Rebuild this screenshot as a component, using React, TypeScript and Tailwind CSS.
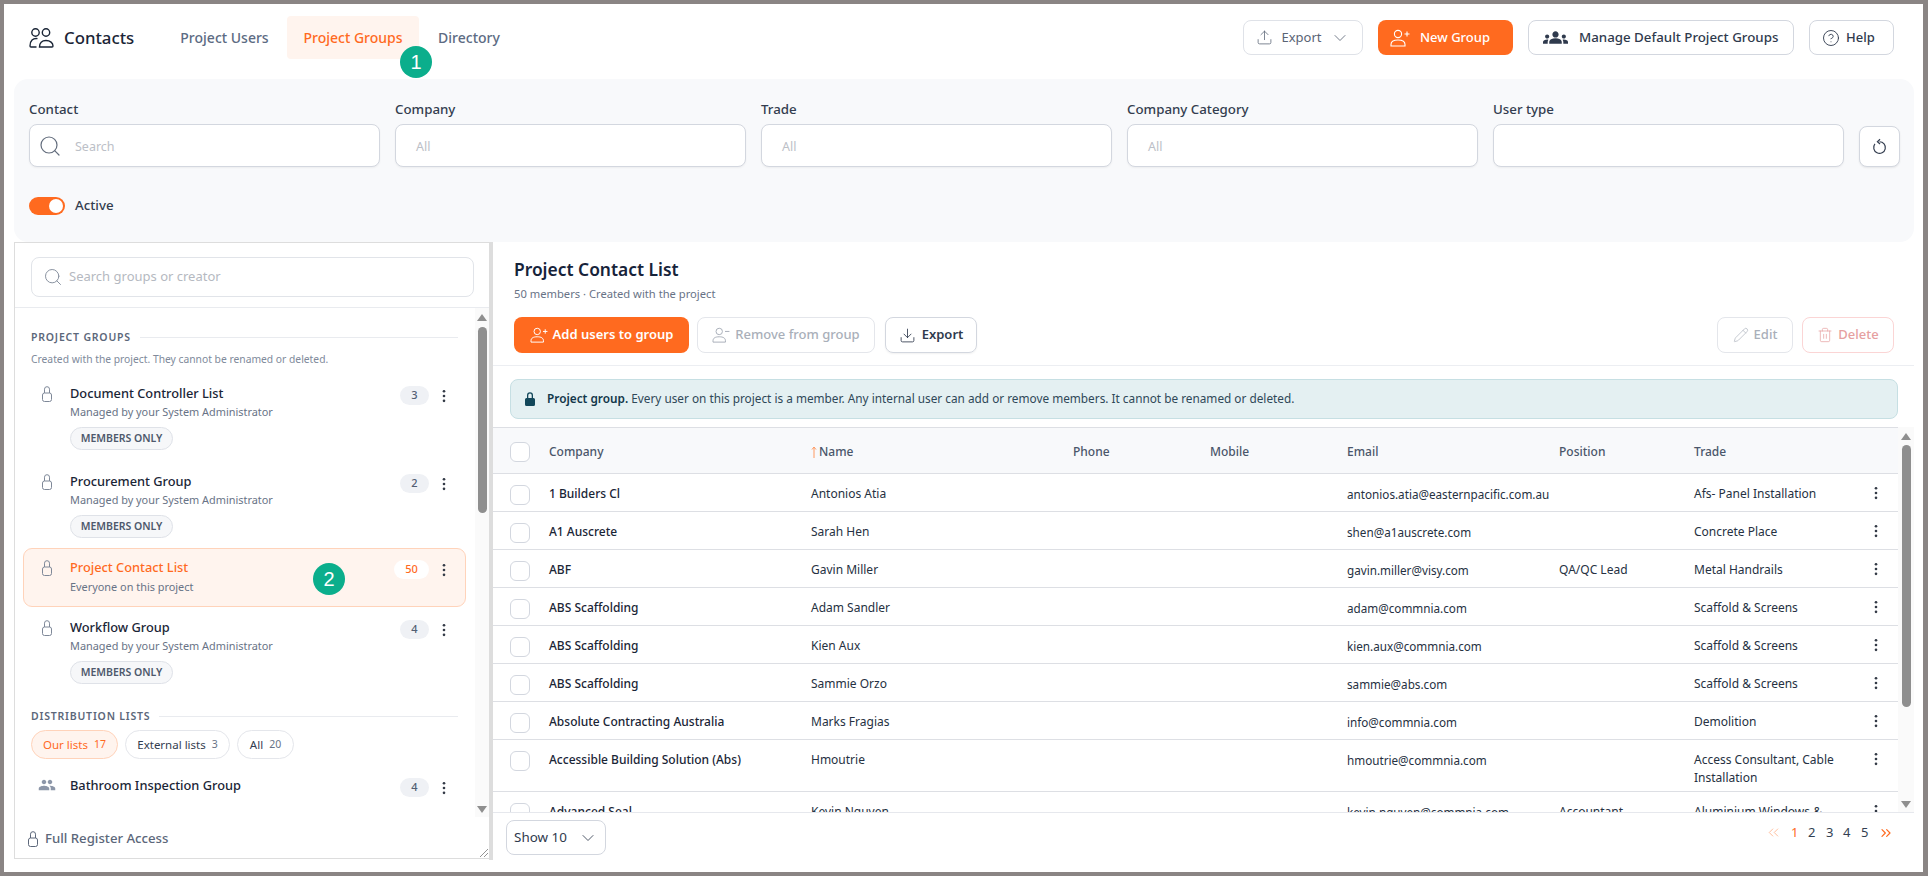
import {
  ChevronDown,
  ChevronsLeft,
  ChevronsRight,
  CircleHelp,
  Download,
  Pencil,
  Search,
  Trash2,
  Upload,
} from "lucide-react";
import { MdGroup, MdGroups } from "react-icons/md";

type Row = {
  company: string;
  name: string;
  email: string;
  position?: string;
  trade: string;
  tall?: boolean;
};

const rows: Row[] = [
  { company: "1 Builders Cl", name: "Antonios Atia", email: "antonios.atia@easternpacific.com.au", trade: "Afs- Panel Installation" },
  { company: "A1 Auscrete", name: "Sarah Hen", email: "shen@a1auscrete.com", trade: "Concrete Place" },
  { company: "ABF", name: "Gavin Miller", email: "gavin.miller@visy.com", position: "QA/QC Lead", trade: "Metal Handrails" },
  { company: "ABS Scaffolding", name: "Adam Sandler", email: "adam@commnia.com", trade: "Scaffold & Screens" },
  { company: "ABS Scaffolding", name: "Kien Aux", email: "kien.aux@commnia.com", trade: "Scaffold & Screens" },
  { company: "ABS Scaffolding", name: "Sammie Orzo", email: "sammie@abs.com", trade: "Scaffold & Screens" },
  { company: "Absolute Contracting Australia", name: "Marks Fragias", email: "info@commnia.com", trade: "Demolition" },
  { company: "Accessible Building Solution (Abs)", name: "Hmoutrie", email: "hmoutrie@commnia.com", trade: "Access Consultant, Cable Installation", tall: true },
  { company: "Advanced Seal", name: "Kevin Nguyen", email: "kevin.nguyen@commnia.com", position: "Accountant", trade: "Aluminium Windows & Doors", tall: true },
];

const Padlock = ({ className = "" }: { className?: string }) => (
  <svg viewBox="0 0 10 16" className={className} fill="none" stroke="currentColor" strokeWidth="1">
    <rect x="0.5" y="7" width="9" height="8.5" rx="2" />
    <path d="M2.5 7V3.2a2.5 2.5 0 0 1 5 0V7" />
  </svg>
);

const Kebab = ({ className = "" }: { className?: string }) => (
  <svg viewBox="0 0 4 16" className={className} fill="currentColor">
    <circle cx="2" cy="2.5" r="1.5" />
    <circle cx="2" cy="8" r="1.5" />
    <circle cx="2" cy="13.5" r="1.5" />
  </svg>
);

const PersonAdd = ({ sign, className = "" }: { sign: "plus" | "minus"; className?: string }) => (
  <svg viewBox="0 0 20 18" className={className} fill="none" stroke="currentColor" strokeWidth="1.1">
    <circle cx="8" cy="5" r="3.6" />
    <path d="M1 17v-1.500C1 12.500 3.500 11 8 11s7 1.500 7 4.500V17z" />
    {sign === "plus" ? <path d="M14.500 5h5M17 2.500v5" /> : <path d="M14.500 5h5" />}
  </svg>
);

const Field = ({ label, placeholder }: { label: string; placeholder?: string }) => (
  <div className="w-[351px] shrink-0">
    <div className="h-[20px] text-[13.3px] leading-[20px] font-medium text-[#333d4f]">{label}</div>
    <div className="mt-[5px] flex h-[43px] items-center rounded-lg border border-[#d3d7df] bg-white pt-[3px] pl-[20px] text-[12.5px] text-[#bcc0c7] shadow-[0_1px_2px_rgba(0,0,0,0.05)]">
      {placeholder}
    </div>
  </div>
);

const Pill = ({ value, active }: { value: number; active?: boolean }) => (
  <span
    className={
      active
        ? "mt-[2px] flex h-[19px] w-[35px] items-center justify-center rounded-full bg-white text-[11px] font-medium text-[#ff6a1f]"
        : "mt-[2px] flex h-[19px] w-[29px] items-center justify-center rounded-full bg-[#eff1f5] text-[11px] font-medium text-[#525e73]"
    }
  >
    {value}
  </span>
);

const GroupItem = ({
  title,
  sub,
  count,
  active,
  membersOnly,
  tight,
}: {
  title: string;
  sub: string;
  count: number;
  active?: boolean;
  membersOnly?: boolean;
  tight?: boolean;
}) => (
  <div
    className={
      active
        ? "flex rounded-[9px] border border-[#ffd3ba] bg-[#fff4ee] pt-[9px] pr-[13px] pb-[11px] pl-[18px]"
        : tight
          ? "flex rounded-[9px] border border-transparent pt-[10px] pr-[13px] pb-[9px] pl-[18px]"
          : "flex rounded-[9px] border border-transparent pt-[10px] pr-[13px] pb-[10px] pl-[18px]"
    }
  >
    <Padlock className="mt-[2px] h-[16px] w-[10px] shrink-0 text-[#7e8898]" />
    <div className="ml-[18px] min-w-0 flex-1">
      <div className={active ? "text-[12.8px] leading-[18px] font-medium text-[#ff6a1f]" : "text-[12.8px] leading-[18px] font-medium text-[#1a2536]"}>
        {title}
      </div>
      <div className={active ? "mt-[3px] text-[10.9px] leading-[16px] text-[#687386]" : "mt-[2px] text-[10.9px] leading-[16px] text-[#687386]"}>{sub}</div>
      {membersOnly && (
        <span className="mt-[7px] flex h-[23px] w-[103px] items-center justify-center rounded-full border border-[#dfe2e8] bg-[#f6f7f9] text-[10.5px] font-semibold text-[#4e596c]">
          MEMBERS ONLY
        </span>
      )}
    </div>
    <Pill value={count} active={active} />
    <span className="mt-[2px] ml-[7px] flex h-[19px] w-[16px] justify-center">
      <Kebab className="h-[14px] w-[4px] self-center text-[#333a46]" />
    </span>
  </div>
);

const SectionHead = ({ label }: { label: string }) => (
  <div className="mx-[8px] flex items-center gap-[9px]">
    <span className="text-[10.5px] leading-[14px] font-semibold tracking-[0.8px] whitespace-nowrap text-[#5c677a]">{label}</span>
    <span className="h-px flex-1 bg-[#e9ebef]" />
  </div>
);

const Chip = ({ label, n, active, className = "" }: { label: string; n: number; active?: boolean; className?: string }) => (
  <span
    className={
      (active
        ? "flex h-[29px] items-center justify-center gap-[6px] rounded-full border border-[#ffd3ba] bg-[#fff4ee] text-[11.5px] text-[#ff6a1f] "
        : "flex h-[29px] items-center justify-center gap-[6px] rounded-full border border-[#e4e6eb] bg-white text-[11.5px] text-[#333d4f] ") + className
    }
  >
    {label}
    <span className={active ? "text-[10.5px] text-[#ff6a1f]" : "text-[10.5px] text-[#687386]"}>{n}</span>
  </span>
);

const ScrollRail = ({ thumbTop, thumbHeight, className }: { thumbTop: string; thumbHeight: string; className: string }) => (
  <div className={className}>
    <svg viewBox="0 0 10 7" className="mx-auto mt-[6px] h-[7px] w-[10px] shrink-0 text-[#8f8f8f]" fill="currentColor">
      <path d="M5 0l5 7H0z" />
    </svg>
    <div className={"mx-auto w-[9px] rounded-full bg-[#8f8f8f] " + thumbTop + " " + thumbHeight} />
    <div className="flex-1" />
    <svg viewBox="0 0 10 7" className="mx-auto mb-[4px] h-[7px] w-[10px] shrink-0 text-[#8f8f8f]" fill="currentColor">
      <path d="M5 7L0 0h10z" />
    </svg>
  </div>
);

const Checkbox = () => <span className="block h-[20px] w-[20px] rounded-[6px] border border-[#d3d7df] bg-white" />;

const Step = ({ n, className }: { n: number; className: string }) => (
  <span
    className={
      "absolute z-10 flex h-[32px] w-[32px] items-center justify-center rounded-full bg-[#0bae8c] font-['Liberation_Sans',sans-serif] text-[20px] text-white " +
      className
    }
  >
    {n}
  </span>
);

export default function App() {
  return (
    <div className="h-[876px] w-[1928px] overflow-hidden bg-[#8a8584] pt-[4px] pr-[5px] pb-[4px] pl-[4px] font-['Noto_Sans',sans-serif]">
      <div className="relative flex h-[868px] flex-col bg-white">
        <header className="flex h-[67px] shrink-0 items-center pr-[29px] pl-[25px]">
          <svg viewBox="0 0 25 20" className="h-[20px] w-[25px] text-[#1a2536]" fill="none" stroke="currentColor" strokeWidth="1.4">
            <circle cx="6.500" cy="4.500" r="3.700" />
            <circle cx="17" cy="4.500" r="3.700" />
            <path d="M10.500 19c0-4 2.300-6.500 6.500-6.500s7 2.500 7 5.500c0 .7-.3 1-1 1z" />
            <path d="M8.500 10.600C4 10 1 12.500 1 18c0 .7.3 1 1 1h5.500" />
          </svg>
          <span className="ml-[10px] w-[71px] text-[16.8px] font-medium whitespace-nowrap text-[#1a2536]">Contacts</span>
          <nav className="ml-[29px] flex items-center text-[14px] font-medium text-[#5c6b83]">
            <span className="flex h-[43px] w-[121px] items-center justify-center">Project Users</span>
            <span className="ml-[2px] flex h-[43px] w-[132px] items-center justify-center rounded bg-[#fff4ee] text-[#ff6a1f]">Project Groups</span>
            <span className="ml-[3px] flex h-[43px] w-[94px] items-center justify-center">Directory</span>
          </nav>
          <div className="flex-1" />
          <button className="flex h-[35px] w-[120px] items-center justify-center gap-[8px] rounded-lg border border-[#dfe2e8] text-[13px] text-[#5a6475]">
            <Upload size={17} strokeWidth={1.1} />
            Export
            <ChevronDown size={20} strokeWidth={1} />
          </button>
          <button className="ml-[15px] flex h-[35px] w-[135px] items-center gap-[10px] rounded-lg bg-[#ff6a1f] pl-[12px] text-[13px] font-medium text-white">
            <PersonAdd sign="plus" className="h-[18px] w-[20px]" />
            New Group
          </button>
          <button className="ml-[15px] flex h-[35px] w-[266px] items-center gap-[11px] rounded-lg border border-[#d3d7df] pl-[14px] text-[13.3px] font-medium text-[#2f3a4d]">
            <MdGroups size={25} />
            Manage Default Project Groups
          </button>
          <button className="ml-[15px] flex h-[35px] w-[85px] items-center gap-[6px] rounded-lg border border-[#d3d7df] pl-[12px] text-[13px] font-medium text-[#2f3a4d]">
            <CircleHelp size={18} strokeWidth={1.2} />
            Help
          </button>
        </header>

        <section className="mt-[8px] mr-[9px] ml-[10px] h-[163px] shrink-0 rounded-[14px] bg-[#f8f9fb] pt-[20px] pl-[15px]">
          <div className="flex gap-[15px]">
            <div className="w-[351px] shrink-0">
              <div className="h-[20px] text-[13.3px] leading-[20px] font-medium text-[#333d4f]">Contact</div>
              <div className="mt-[5px] flex h-[43px] items-center rounded-lg border border-[#d3d7df] bg-white pl-[8px] text-[12.5px] text-[#bcc0c7] shadow-[0_1px_2px_rgba(0,0,0,0.05)]">
                <Search size={24} strokeWidth={1.2} className="text-[#626c7c]" />
                <span className="mt-[3px] ml-[13px]">Search</span>
              </div>
            </div>
            <Field label="Company" placeholder="All" />
            <Field label="Trade" placeholder="All" />
            <Field label="Company Category" placeholder="All" />
            <Field label="User type" />
            <button className="mt-[27px] flex h-[41px] w-[41px] items-center justify-center rounded-lg border border-[#d3d7df] bg-white text-[#333d4f] shadow-[0_1px_2px_rgba(0,0,0,0.08)]">
              <svg viewBox="0 0 16 16" className="h-[17px] w-[17px]" fill="none" stroke="currentColor" strokeWidth="1.1">
                <path d="M8 3.500a5.500 5.500 0 1 1-4.300 2.100" />
                <path d="M8.500 1.200L6 3.500l2.500 2.200" />
              </svg>
            </button>
          </div>
          <div className="mt-[29px] flex items-center">
            <span className="flex h-[18px] w-[36px] items-center justify-end rounded-full bg-[#ff6a1f] pr-[2px]">
              <span className="h-[14px] w-[14px] rounded-full bg-white" />
            </span>
            <span className="ml-[10px] text-[13.3px] font-medium text-[#333d4f]">Active</span>
          </div>
        </section>

        <div className="flex min-h-0 flex-1">
          <aside className="relative ml-[10px] flex h-[617px] w-[475px] shrink-0 flex-col border border-r-0 border-[#dddddd]">
            <div className="h-[65px] shrink-0 border-b border-[#e9ebef] pt-[14px] pr-[15px] pl-[16px]">
              <div className="flex h-[40px] items-center rounded-lg border border-[#e1e4e9] pl-[11px] text-[13px] text-[#b5b9c1]">
                <Search size={20} strokeWidth={1.2} className="text-[#8a93a1]" />
                <span className="ml-[6px]">Search groups or creator</span>
              </div>
            </div>
            <div className="flex min-h-0 flex-1">
              <div className="min-w-0 flex-1 overflow-hidden pt-[22px] pr-[9px] pl-[8px]">
                <SectionHead label="PROJECT GROUPS" />
                <p className="mx-[8px] mt-[8px] mb-[6px] text-[10.3px] leading-[15px] text-[#808a9b]">
                  Created with the project. They cannot be renamed or deleted.
                </p>
                <GroupItem title="Document Controller List" sub="Managed by your System Administrator" count={3} membersOnly />
                <GroupItem title="Procurement Group" sub="Managed by your System Administrator" count={2} membersOnly tight />
                <GroupItem title="Project Contact List" sub="Everyone on this project" count={50} active />
                <GroupItem title="Workflow Group" sub="Managed by your System Administrator" count={4} membersOnly />
                <div className="mt-[14px]">
                  <SectionHead label="DISTRIBUTION LISTS" />
                </div>
                <div className="mx-[8px] mt-[7px] flex gap-[7px]">
                  <Chip label="Our lists" n={17} active className="w-[87px]" />
                  <Chip label="External lists" n={3} className="w-[105px]" />
                  <Chip label="All" n={20} className="w-[57px]" />
                </div>
                <div className="mt-[6px] flex pt-[11px] pr-[14px] pl-[15px]">
                  <MdGroup size={18} className="shrink-0 text-[#8c96a8]" />
                  <div className="ml-[14px] flex-1 text-[12.8px] leading-[18px] font-medium text-[#1a2536]">Bathroom Inspection Group</div>
                  <Pill value={4} />
                  <span className="mt-[2px] ml-[7px] flex h-[19px] w-[16px] justify-center">
                    <Kebab className="h-[14px] w-[4px] self-center text-[#333a46]" />
                  </span>
                </div>
              </div>
              <ScrollRail className="flex h-full w-[14px] shrink-0 flex-col bg-[#fafafa]" thumbTop="mt-[6px]" thumbHeight="h-[186px]" />
            </div>
            <div className="flex h-[41px] shrink-0 items-center pt-[3px] pl-[13px] text-[13.2px] text-[#5c677a]">
              <Padlock className="h-[16px] w-[10px] text-[#5c677a]" />
              <span className="ml-[7px] font-medium">Full Register Access</span>
            </div>
            <svg viewBox="0 0 8 8" className="absolute right-[1px] bottom-[1px] h-[8px] w-[8px] text-[#777777]" fill="none" stroke="currentColor" strokeWidth="0.8">
              <path d="M0 8L8 0M4 8L8 4" />
            </svg>
            <Step n={2} className="top-[320px] left-[298px]" />
          </aside>

          <div className="h-[618px] w-[4px] shrink-0 bg-[#dddddd]" />

          <main className="mr-[9px] flex h-[618px] min-w-0 flex-1 flex-col">
            <div className="h-[124px] shrink-0 border-b border-[#eceef2] pt-[16px] pr-[20px] pl-[21px]">
              <h1 className="text-[17.4px] leading-[22px] font-semibold text-[#16233a]">Project Contact List</h1>
              <p className="mt-[6px] text-[11.2px] leading-[16px] text-[#687386]">50 members · Created with the project</p>
              <div className="mt-[15px] flex">
                <button className="flex h-[36px] w-[175px] items-center justify-center gap-[5px] rounded-lg bg-[#ff6a1f] text-[13px] font-semibold text-white">
                  <PersonAdd sign="plus" className="h-[16px] w-[18px]" />
                  Add users to group
                </button>
                <button className="ml-[8px] flex h-[36px] w-[178px] items-center justify-center gap-[5px] rounded-lg border border-[#e4e6eb] text-[13px] font-medium text-[#a9afb9]">
                  <PersonAdd sign="minus" className="h-[16px] w-[18px]" />
                  Remove from group
                </button>
                <button className="ml-[10px] flex h-[36px] w-[92px] items-center justify-center gap-[6px] rounded-lg border border-[#d3d7df] text-[13px] font-semibold text-[#2f3a4d] shadow-[0_1px_2px_rgba(0,0,0,0.06)]">
                  <Download size={17} strokeWidth={1.2} />
                  Export
                </button>
                <div className="flex-1" />
                <button className="flex h-[36px] w-[76px] items-center justify-center gap-[5px] rounded-lg border border-[#e4e6eb] text-[13px] font-medium text-[#a9afb9]">
                  <Pencil size={16} strokeWidth={1} />
                  Edit
                </button>
                <button className="ml-[9px] flex h-[36px] w-[92px] items-center justify-center gap-[5px] rounded-lg border border-[#fbd5d5] text-[13px] font-medium text-[#e6a0a0]">
                  <Trash2 size={16} strokeWidth={1.1} />
                  Delete
                </button>
              </div>
            </div>

            <div className="mt-[13px] mr-[16px] ml-[17px] flex h-[40px] shrink-0 items-center rounded-lg border border-[#c6dfe3] bg-[#e4f0f2] pl-[14px] text-[11.8px] text-[#2f4858]">
              <svg viewBox="0 0 10 14" className="h-[14px] w-[10px] text-[#12475a]" fill="currentColor">
                <path d="M2 6V3.200a3 3 0 0 1 6 0V6h.5A1.500 1.500 0 0 1 10 7.500v5A1.500 1.500 0 0 1 8.500 14h-7A1.500 1.500 0 0 1 0 12.500v-5A1.500 1.500 0 0 1 1.500 6zM3.300 6h3.400V3.200a1.700 1.700 0 0 0-3.400 0z" />
              </svg>
              <span className="ml-[12px]">
                <b className="font-semibold text-[#12374a]">Project group.</b> Every user on this project is a member. Any internal user can add or
                remove members. It cannot be renamed or deleted.
              </span>
            </div>

            <div className="mt-[8px] flex min-h-0 flex-1">
              <div className="min-w-0 flex-1 overflow-hidden">
                <table className="w-[1405px] table-fixed border-t border-[#dddfe4] text-left text-[12px] text-[#263142]">
                  <colgroup>
                    <col className="w-[56px]" />
                    <col className="w-[262px]" />
                    <col className="w-[262px]" />
                    <col className="w-[137px]" />
                    <col className="w-[137px]" />
                    <col className="w-[212px]" />
                    <col className="w-[135px]" />
                    <col className="w-[165px]" />
                    <col className="w-[39px]" />
                  </colgroup>
                  <thead className="bg-[#f8f9fb] text-[#4a566a]">
                    <tr className="h-[46px] border-b border-[#dddfe4]">
                      <th className="pt-[3px] pl-[17px]">
                        <Checkbox />
                      </th>
                      <th className="pt-[3px] font-medium">Company</th>
                      <th className="pt-[2px] font-medium">
                        <span className="flex items-center gap-[2px]">
                          <svg viewBox="0 0 6 12" className="h-[12px] w-[6px] text-[#ff9a63]" fill="none" stroke="currentColor" strokeWidth="1">
                            <path d="M3 12V1M1 3.500L3 1l2 2.500" />
                          </svg>
                          Name
                        </span>
                      </th>
                      <th className="pt-[3px] font-medium">Phone</th>
                      <th className="pt-[3px] font-medium">Mobile</th>
                      <th className="pt-[3px] font-medium">Email</th>
                      <th className="pt-[3px] font-medium">Position</th>
                      <th className="pt-[3px] font-medium">Trade</th>
                      <th />
                    </tr>
                  </thead>
                  <tbody>
                    {rows.map((r) => (
                      <tr key={r.email} className={r.tall ? "h-[52px] border-b border-[#dddfe4] align-top" : "h-[38px] border-b border-[#dddfe4] align-top"}>
                        <td className="pt-[11px] pl-[17px]">
                          <Checkbox />
                        </td>
                        <td className="pt-[11px] leading-[18px] font-medium text-[#1a2536]">{r.company}</td>
                        <td className="pt-[11px] leading-[18px]">{r.name}</td>
                        <td />
                        <td />
                        <td className="pt-[11px] text-[11.7px] leading-[18px] whitespace-nowrap">{r.email}</td>
                        <td className="pt-[11px] leading-[18px]">{r.position}</td>
                        <td className="pt-[11px] pr-[8px] leading-[18px]">{r.trade}</td>
                        <td className="pt-[12px] pl-[15px]">
                          <Kebab className="h-[14px] w-[4px] text-[#333a46]" />
                        </td>
                      </tr>
                    ))}
                  </tbody>
                </table>
              </div>
              <ScrollRail className="flex w-[16px] shrink-0 flex-col bg-[#fafafa]" thumbTop="mt-[5px]" thumbHeight="h-[262px]" />
            </div>

            <div className="flex h-[48px] shrink-0 items-start justify-between border-t border-[#e6e8ed]">
              <button className="mt-[7px] ml-[13px] flex h-[35px] w-[100px] items-center justify-center gap-[11px] rounded-lg border border-[#d3d7df] text-[13.4px] text-[#2f3a4d]">
                Show 10
                <ChevronDown size={20} strokeWidth={1} />
              </button>
              <div className="mt-[10px] mr-[20px] flex items-center text-[13px] text-[#333f52]">
                <ChevronsLeft size={17} strokeWidth={1.2} className="text-[#ffb48c]" />
                <span className="ml-[9px] w-[17px] text-[#ff6a1f]">1</span>
                <span className="w-[18px]">2</span>
                <span className="w-[17px]">3</span>
                <span className="w-[18px]">4</span>
                <span className="w-[15px]">5</span>
                <ChevronsRight size={16} strokeWidth={1.8} className="ml-[2px] text-[#ff6a1f]" />
              </div>
            </div>
          </main>
        </div>

        <Step n={1} className="top-[42px] left-[396px]" />
      </div>
    </div>
  );
}
